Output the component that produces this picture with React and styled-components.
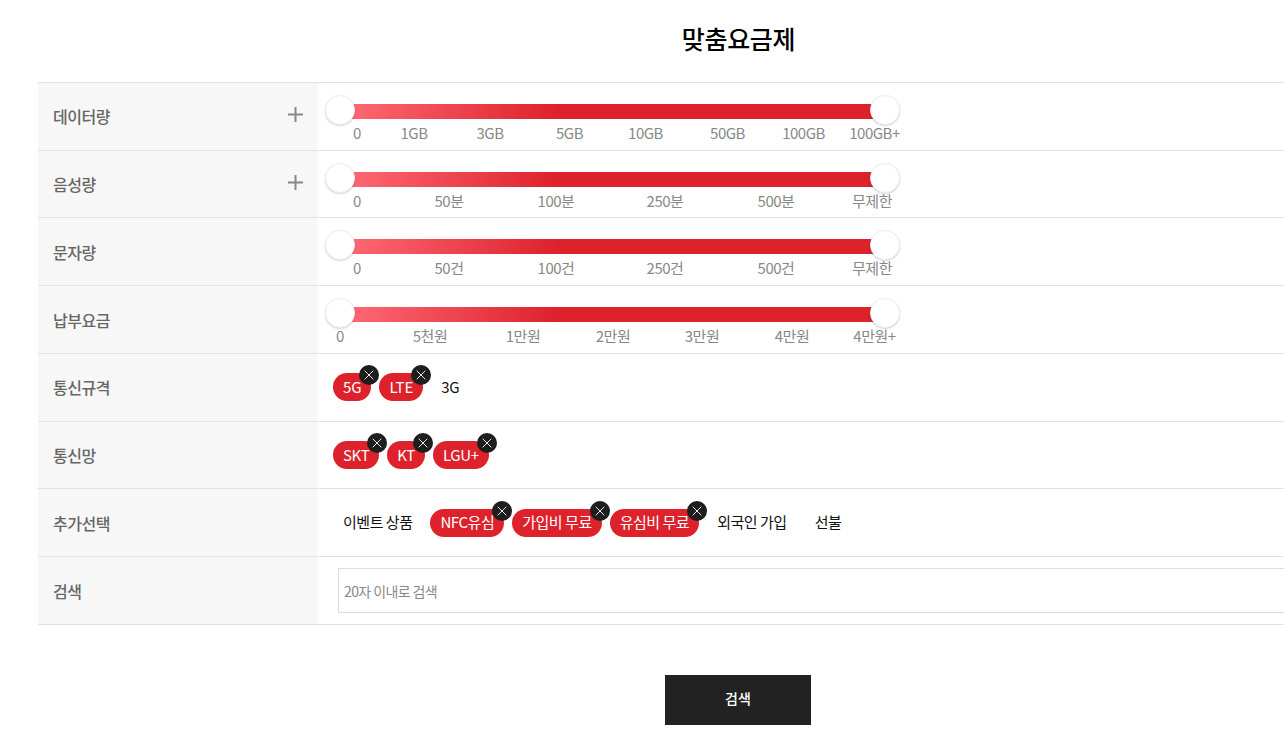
import React from 'react';
import styled, { createGlobalStyle } from 'styled-components';

const Global = createGlobalStyle`
  html, body {
    margin: 0;
    padding: 0;
    background: #fff;
    overflow-x: hidden;
    font-family: "Noto Sans CJK KR", "Noto Sans", sans-serif;
  }
`;

const Page = styled.div`
  width: 1400px;
  margin-left: 38px;
`;

const Title = styled.h1`
  margin: 0;
  height: 81.9px;
  display: flex;
  align-items: center;
  justify-content: center;
  padding: 0 0 6px 1px;
  box-sizing: border-box;
  font-size: 25px;
  font-weight: 500;
  letter-spacing: -0.3px;
  color: #000;
`;

const Table = styled.div`
  border-top: 1px solid #e2e2e2;
`;

const Row = styled.div`
  display: flex;
  height: 67.75px;
  box-sizing: border-box;
  border-bottom: 1px solid #e2e2e2;
`;

const Head = styled.div`
  width: 280px;
  flex: none;
  box-sizing: border-box;
  display: flex;
  align-items: center;
  justify-content: space-between;
  padding: 0 15px;
  background: #f7f7f7;
  font-size: 16px;
  font-weight: 500;
  letter-spacing: -0.5px;
  color: #666;
`;

const Plus = styled.svg`
  width: 15px;
  height: 15px;
  margin-top: -4px;
  stroke: #888;
  stroke-width: 2;
`;

const Cell = styled.div`
  flex: 1;
  min-width: 0;
  display: flex;
  align-items: center;
`;

const SliderCell = styled.div`
  flex: 1;
  padding: 12px 0 0 7px;
`;

const Slider = styled.div`
  position: relative;
  width: 575px;
  height: 30px;
  display: flex;
  align-items: center;
  padding: 0 15px;
  box-sizing: border-box;
`;

const Track = styled.div`
  width: 100%;
  height: 15px;
  margin-top: 3px;
  background: linear-gradient(100deg, #ff6b76 0%, #dd222c 40%, #dd222c 100%);
`;

const Handle = styled.span`
  position: absolute;
  top: 0;
  ${p => (p.$end ? 'right: 0;' : 'left: 0;')}
  width: 30px;
  height: 30px;
  box-sizing: border-box;
  border-radius: 50%;
  background: #fff;
  border: 1px solid #eee;
  box-shadow: 0 1px 2px rgba(0, 0, 0, 0.18);
`;

const Ticks = styled.div`
  display: grid;
  grid-template-columns: ${p => p.$cols};
  margin: -1px 0 0 ${p => p.$start}px;
  font-size: 15px;
  line-height: 18px;
  letter-spacing: -0.5px;
  color: #888;
`;

const Tick = styled.span`
  text-align: center;
  white-space: nowrap;
`;

const Options = styled.div`
  display: flex;
  align-items: center;
  gap: 8px;
  padding-left: 15px;
  letter-spacing: ${p => p.$spacing}px;
`;

const Chip = styled.span`
  position: relative;
  height: 28px;
  padding: 0 10px 2px;
  box-sizing: border-box;
  border-radius: 14px;
  display: flex;
  align-items: center;
  font-size: 15px;
  white-space: nowrap;
  background: ${p => (p.$on ? '#dd222c' : 'transparent')};
  color: ${p => (p.$on ? '#fff' : '#111')};
`;

const Remove = styled.span`
  position: absolute;
  top: -8px;
  right: -8px;
  width: 20px;
  height: 20px;
  border-radius: 50%;
  background: #1e1e1e;
  display: flex;
  align-items: center;
  justify-content: center;
`;

const Search = styled.input`
  flex: 1;
  height: 45px;
  margin: 0 20px;
  box-sizing: border-box;
  border: 1px solid #ddd;
  padding: 0 5px;
  font: 400 14px "Noto Sans CJK KR", sans-serif;
  letter-spacing: -0.6px;
  outline: none;
  &::placeholder {
    color: #888;
    opacity: 1;
  }
`;

const Actions = styled.div`
  display: flex;
  justify-content: center;
  padding: 50px 0 23px;
`;

const Button = styled.button`
  width: 146px;
  height: 50px;
  padding: 0 0 3px;
  border: 0;
  background: #222;
  color: #fff;
  font: 500 14px "Noto Sans CJK KR", sans-serif;
`;

// columns are picked so that each label centres under its stop
const sliders = [
  {
    name: '데이터량',
    plus: true,
    start: 1,
    cols: '62px 52px 100px 59px 93px 71px 81px 61px',
    ticks: ['0', '1GB', '3GB', '5GB', '10GB', '50GB', '100GB', '100GB+'],
  },
  {
    name: '음성량',
    plus: true,
    start: 1,
    cols: '62px 122px 92px 126px 96px 96px',
    ticks: ['0', '50분', '100분', '250분', '500분', '무제한'],
  },
  {
    name: '문자량',
    start: 1,
    cols: '62px 122px 92px 126px 96px 96px',
    ticks: ['0', '50건', '100건', '250건', '500건', '무제한'],
  },
  {
    name: '납부요금',
    start: -16,
    cols: '62px 118px 68px 112px 66px 114px 51px',
    ticks: ['0', '5천원', '1만원', '2만원', '3만원', '4만원', '4만원+'],
  },
];

const options = [
  { name: '통신규격', spacing: -0.1, items: [['5G', 1], ['LTE', 1], ['3G', 0]] },
  { name: '통신망', spacing: -0.35, items: [['SKT', 1], ['KT', 1], ['LGU+', 1]] },
  {
    name: '추가선택',
    spacing: -0.48,
    items: [['이벤트 상품', 0], ['NFC유심', 1], ['가입비 무료', 1], ['유심비 무료', 1], ['외국인 가입', 0], ['선불', 0]],
  },
];

const X = () => (
  <svg width="10" height="10" viewBox="0 0 10 10" stroke="#fff" strokeWidth="0.9">
    <path d="M0.7 0.7 L9.3 9.3 M9.3 0.7 L0.7 9.3" />
  </svg>
);

export default function App() {
  return (
    <Page>
      <Global />
      <Title>맞춤요금제</Title>
      <Table>
        {sliders.map(s => (
          <Row key={s.name}>
            <Head>
              {s.name}
              {s.plus && (
                <Plus viewBox="0 0 15 15">
                  <path d="M7.5 0 V15 M0 7.5 H15" />
                </Plus>
              )}
            </Head>
            <SliderCell>
              <Slider>
                <Track />
                <Handle />
                <Handle $end />
              </Slider>
              <Ticks $cols={s.cols} $start={s.start}>
                {s.ticks.map(t => (
                  <Tick key={t}>{t}</Tick>
                ))}
              </Ticks>
            </SliderCell>
          </Row>
        ))}
        {options.map(o => (
          <Row key={o.name}>
            <Head>{o.name}</Head>
            <Cell>
              <Options $spacing={o.spacing}>
                {o.items.map(([label, on]) => (
                  <Chip key={label} $on={!!on}>
                    {label}
                    {!!on && (
                      <Remove>
                        <X />
                      </Remove>
                    )}
                  </Chip>
                ))}
              </Options>
            </Cell>
          </Row>
        ))}
        <Row>
          <Head>검색</Head>
          <Cell>
            <Search placeholder="20자 이내로 검색" />
          </Cell>
        </Row>
      </Table>
      <Actions>
        <Button>검색</Button>
      </Actions>
    </Page>
  );
}
